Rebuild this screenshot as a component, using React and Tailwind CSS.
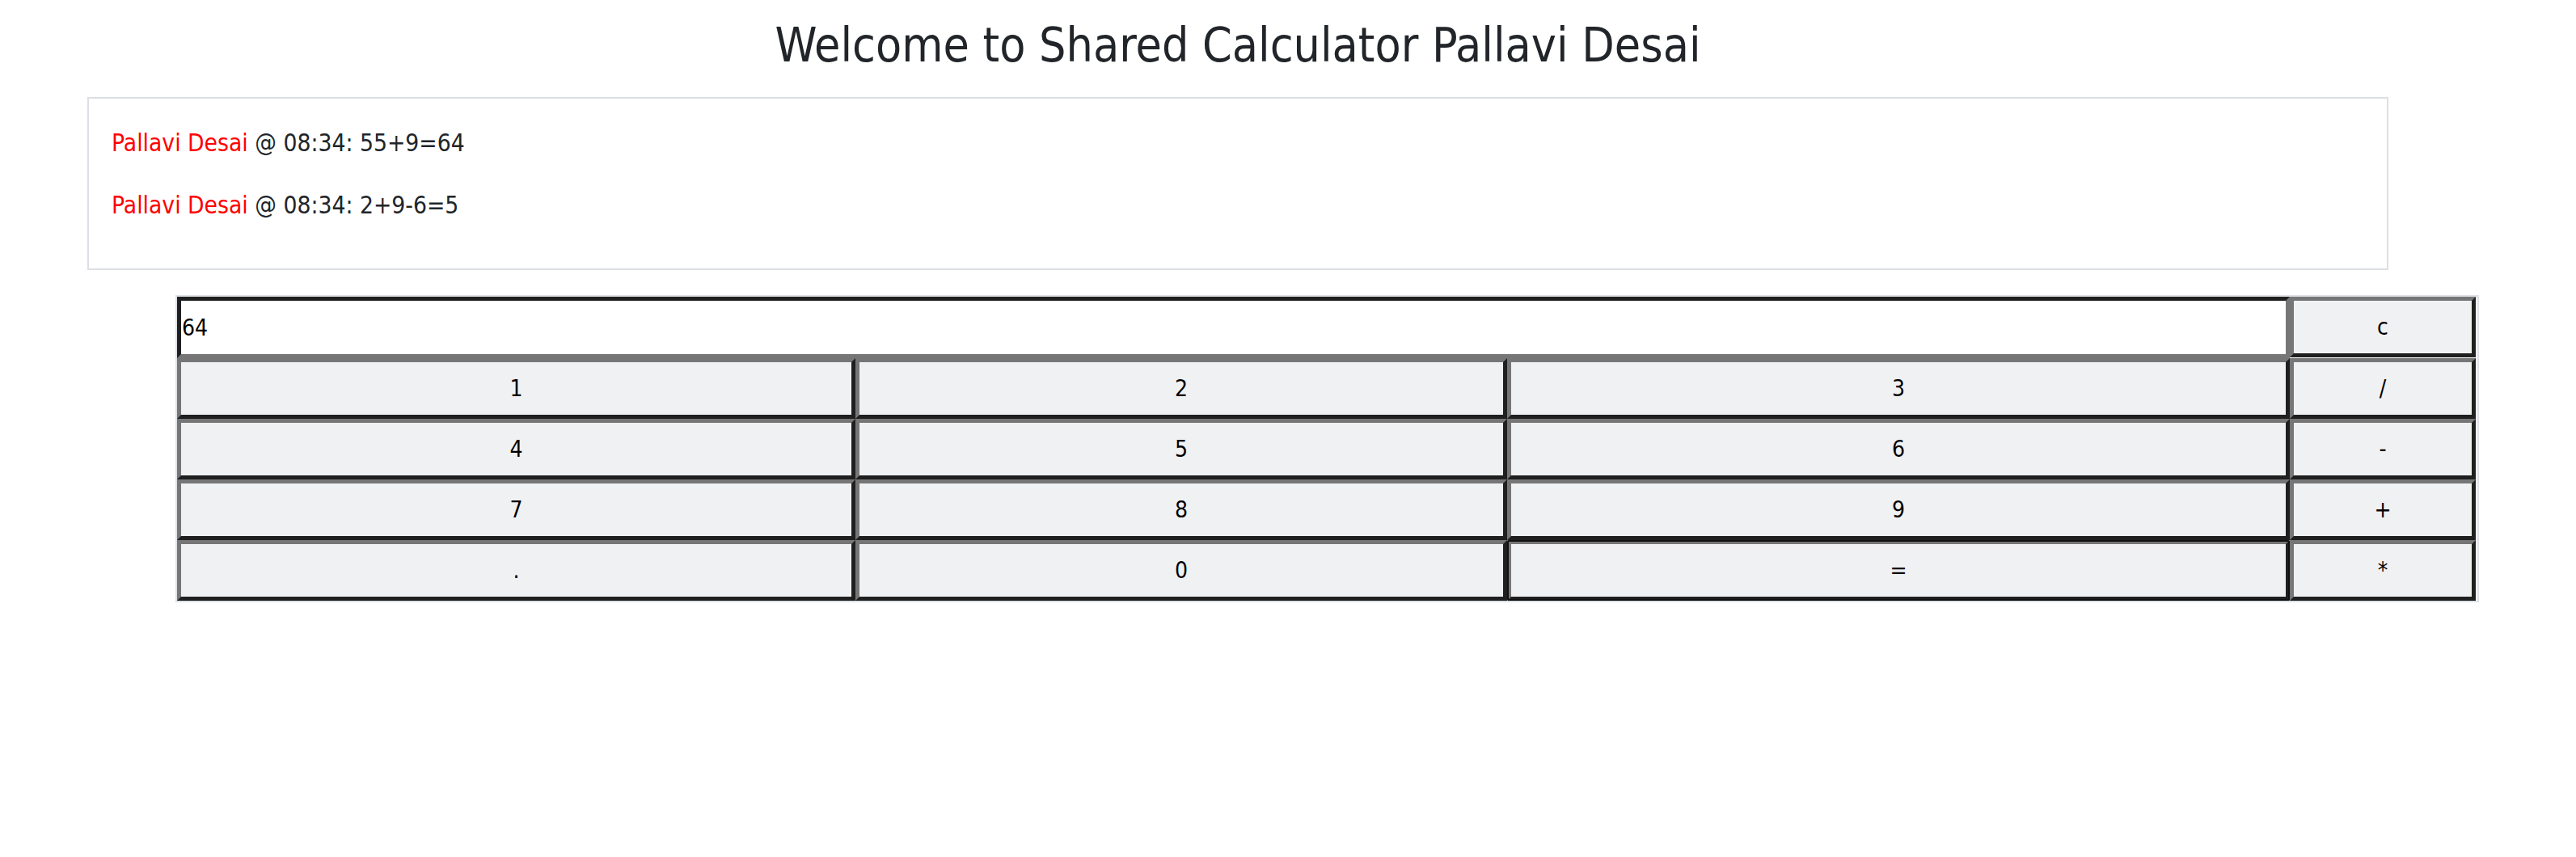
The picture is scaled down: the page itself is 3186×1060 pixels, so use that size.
import { useState } from "react";

const FONT = "font-['DejaVu_Sans_Condensed','DejaVu_Sans',sans-serif]";

const messages = [
  { name: "Pallavi Desai", time: "08:34", expr: "55+9=64" },
  { name: "Pallavi Desai", time: "08:34", expr: "2+9-6=5" },
];

const rows = [
  ["1", "2", "3", "/"],
  ["4", "5", "6", "-"],
  ["7", "8", "9", "+"],
  [".", "0", "=", "*"],
];

const btn =
  "h-[75px] bg-[#f0f1f3] text-black text-[28px] border-[5px] border-t-[#767676] border-l-[#767676] border-b-[#1f1f1f] border-r-[#1f1f1f]";

const App = () => {
  const [display] = useState("64");

  return (
    <div className={`w-[3186px] min-h-[1060px] bg-white text-[#212529] ${FONT}`}>
      <div className="ml-[108px] w-[2846px]">
        {/* Title */}
        <h1 className="pt-[21px] text-center text-[58.5px] leading-[70px] font-normal">
          Welcome to Shared Calculator Pallavi Desai
        </h1>

        {/* History */}
        <div className="mt-[29px] border-2 border-[#dcdfe3] px-[28px] pt-[32px] pb-[24px] text-[29.7px] leading-[46px]">
          {messages.map((m, i) => (
            <p key={i} className="mb-[31px]">
              <span className="text-[#ff0000]">{m.name}</span> @ {m.time}: {m.expr}
            </p>
          ))}
        </div>
      </div>

      {/* Calculator */}
      <div className="ml-[217px] mt-[31px] w-[2849px] border-2 border-[#dee2e6] grid grid-cols-[839px_806px_968px_230px]">
        <input
          readOnly
          value={display}
          className="col-span-3 h-[76px] bg-white text-black text-[28px] px-[1px] border-[5px] border-t-[#1f1f1f] border-l-[#1f1f1f] border-b-[#767676] border-r-[#767676] outline-none"
        />
        <button className={btn}>c</button>
        {rows.map((row) =>
          row.map((k) => (
            <button
              key={k}
              className={
                k === "="
                  ? `${btn} outline-2 outline-solid outline-[#101010] -outline-offset-2 rounded-[2px]`
                  : btn
              }
            >
              {k}
            </button>
          ))
        )}
      </div>
    </div>
  );
};

export default App;
